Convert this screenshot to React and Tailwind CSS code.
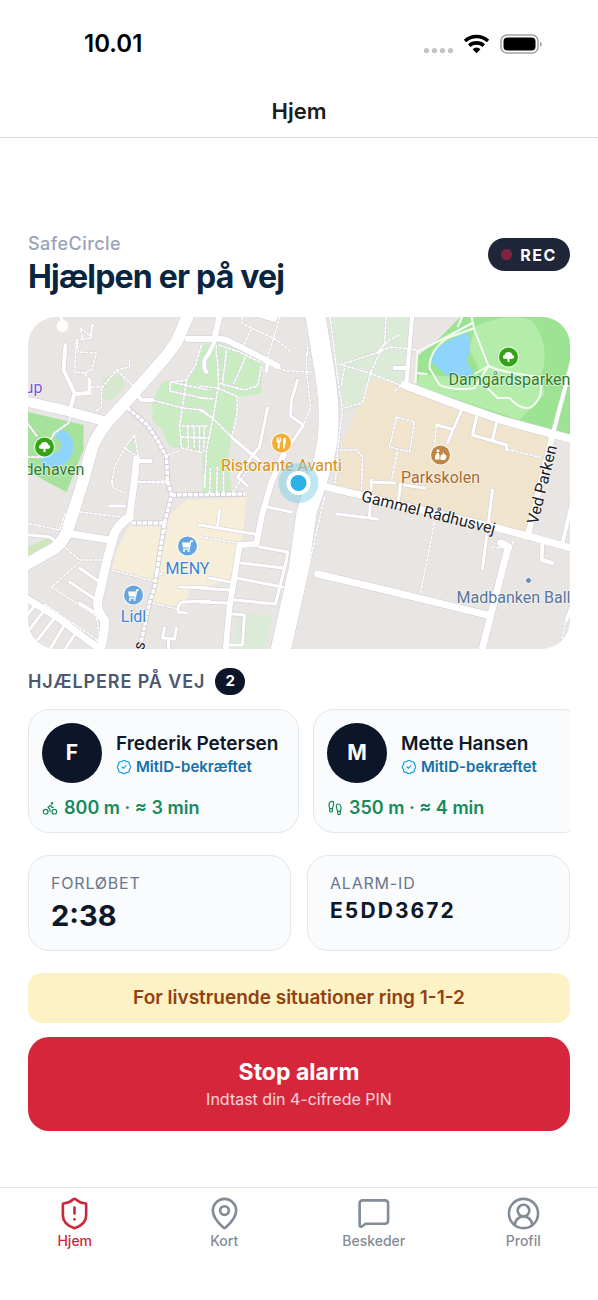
import React, { useState } from "react";
import { BadgeCheck, Bike, Footprints, MapPin, ShieldAlert, CircleUserRound } from "lucide-react";

const helpers = [
  { name: "Frederik Petersen", distance: "800 m", eta: "3 min", icon: Bike },
  { name: "Mette Hansen", distance: "350 m", eta: "4 min", icon: Footprints },
];

const MessageIcon = ({ size = 24, strokeWidth = 2 }) => (
  <svg
    width={size}
    height={size}
    viewBox="0 0 24 24"
    fill="none"
    stroke="currentColor"
    strokeWidth={strokeWidth}
    strokeLinecap="round"
    strokeLinejoin="round"
    aria-hidden="true"
  >
    <path d="M3.500 21a.9.9 0 0 1-1-1V5a2 2 0 0 1 2-2h15.500a2 2 0 0 1 2 2v12a2 2 0 0 1-2 2H6.500l-2.200 1.700a1 1 0 0 1-.8.3z" />
  </svg>
);

const tabs = [
  { label: "Hjem", icon: ShieldAlert },
  { label: "Kort", icon: MapPin },
  { label: "Beskeder", icon: MessageIcon },
  { label: "Profil", icon: CircleUserRound },
];

const StatusBar = () => (
  <div className="flex items-center justify-between h-[88px] pl-[84px] pr-[55px]">
    <span className="text-[24px] leading-7 font-semibold text-black">10.01</span>
    <svg width="120" height="24" viewBox="0 0 120 24" aria-hidden="true">
      <g fill="#c4c4c6">
        <circle cx="3.5" cy="18.5" r="2.6" />
        <circle cx="11.5" cy="18.5" r="2.6" />
        <circle cx="19.5" cy="18.5" r="2.6" />
        <circle cx="27.5" cy="18.5" r="2.6" />
      </g>
      <g fill="none" stroke="#000" strokeWidth="3.6">
        <path d="M42 9a17 17 0 0 1 23 0" />
        <path d="M46.2 13.6a11 11 0 0 1 14.6 0" />
      </g>
      <path d="M53.5 21.2l-3.9-4a5.6 5.6 0 0 1 7.8 0z" />
      <rect x="78" y="3" width="37" height="18" rx="6" fill="none" stroke="#a3a3a5" strokeWidth="1.5" />
      <rect x="80.5" y="5.5" width="32" height="13" rx="4" />
      <path d="M117 9.500c2.400 1 2.400 4.500 0 5.500z" fill="#a3a3a5" />
    </svg>
  </div>
);

const TreePin = ({ x, y }) => (
  <g transform={`translate(${x} ${y})`}>
    <circle r="10.500" fill="#fff" fillOpacity="0.8" />
    <circle r="9.500" fill="#35a316" />
    <path
      d="M-1 5V1.500c-1 .8-4.600.8-4.600-1.500 0-1.200.8-1.900 1.700-2C-3.700-4-2-5 0-5s3.700 1 3.900 3c.9.1 1.700.8 1.700 2 0 2.300-3.600 2.300-4.600 1.500V5z"
      fill="#fff"
    />
  </g>
);

const CartPin = ({ x, y }) => (
  <g transform={`translate(${x} ${y})`}>
    <circle r="10.500" fill="#fff" fillOpacity="0.8" />
    <circle r="9.500" fill="#64a5e0" />
    <path d="M-5.500-3.500h8l-1 5h-6z" fill="#fff" />
    <path d="M5.500-5H3.300L1.700 3.200h-6" fill="none" stroke="#fff" strokeWidth="1.300" />
    <circle cx="-3.500" cy="5" r="1.100" fill="#fff" />
    <circle cx="1" cy="5" r="1.100" fill="#fff" />
  </g>
);

// Every street is stroked twice: a wider grey casing below, white on top
const streets = [
  { w: 20, d: "M315 310L326 377Q330 405 329 427Q328 450 321 470L307 513L299 570L280 655" },
  { w: 12, d: "M191 310L177 342L166 357L137 390L108 422Q96 437 92 450L83 483L68 530Q64 542 54 549L22 567" },
  { w: 10, d: "M20 400L64 410L108 422" },
  { w: 7, d: "M22 595L60 619L104 652" },
  { w: 9, d: "M130 517Q115 527 113 540L107 562L98 603Q98 612 105 620Q106 632 100 652" },
  { w: 7, d: "M137 459L135 480L130 517M66 533L110 540" },
  { w: 6, d: "M188 339L210 339Q223 337 233 343L253 353L278 366M215 338L221 312" },
  { w: 4, d: "M215 341Q212 350 205 360Q204 370 207 372M268 362L267 371M255 314L275 320L278 314" },
  { w: 8, d: "M405 385L450 402L502 420L575 440" },
  { w: 4, d: "M413 312L407 382M395 368L408 368M573 360L553 435" },
  { w: 6, d: "M553 435L528 537" },
  { w: 7, d: "M327 487L360 495L498 528L532 537L575 549" },
  { w: 7, d: "M318 574L390 591L488 615M501 543L509 547L504 565L482 652" },
  { w: 4, d: "M66 345L64 370L75 393L71 408M75 394L90 393L90 380M135 392L142 400L153 400M138 461L151 461M60 312L63 322" },
  { w: 3, d: "M298 380L292 400L291 416L304 425L284 455" },
  { w: 6, d: "M284 455L272 482L262 517L257 544L240 545L235 577L230 607L226 652" },
  { w: 3, d: "M268 408L260 447L252 457L238 477L248 486M232 437L253 455L265 465" },
  { w: 3, d: "M268 507L292 512M260 547L288 552L287 560L276 604L235 600M242 563L284 568M237 578L283 587M210 578L230 582M200 588L230 590M200 602L228 603M233 614L245 615L243 645L230 645" },
  { w: 3, d: "M200 525L255 534M220 510L218 527M180 587L210 588M187 613L179 612Q177 607 182 602L210 601M165 628L163 638L175 639L177 628M169 639L169 652" },
  { w: 3, d: "M80 568L100 582M70 582L97 600M80 603L95 612M110 506L125 506M20 534L50 537L62 545" },
  { w: 3, d: "M45 610L28 632M55 618L38 640M65 625L50 650M76 633L62 655M36 605L22 622" },
  { w: 3, d: "M462 410L448 443M437 425L452 429M477 417L473 435L507 445L507 450M497 423L493 440M338 514L378 519M372 480L370 517M493 490L483 569M405 485L425 488M371 482L395 483M401 484L399 500" },
  { w: 4, d: "M543 542L542 560L553 563M572 505L563 543M572 607L567 620" },
];

const paths = [
  "M92 325L92 338L83 339L81 328L91 336L94 324M77 340L79 352L97 353L92 370L85 373L75 372L77 340L83 339M85 373L90 380",
  "M92 387L103 387L117 370L130 367L130 358M117 370L135 387M102 387L102 407L95 412",
  "M153 400L183 408L203 410L212 418M202 345L196 365L187 380L183 408L180 425L182 448L203 453",
  "M171 382L209 390M171 382L170 391L208 399M171 382L187 380",
  "M182 426L208 426M181 437L208 438M188 426L189 449M194 426L195 449M200 426L200 452M205 426L204 452",
  "M217 345Q216 355 218 360L219 385L215 410L207 450L205 488M200 386L218 388L237 396Q240 410 232 437M218 383L245 390L258 386L262 366M227 350L223 384M246 357L234 384M200 410L212 417L232 437M219 345L240 352L262 363M200 398L215 399",
  "M135 435L125 448L115 467L112 485M135 435L139 457M125 448L137 456M138 482L168 483M168 455L182 450",
  "M27 422L38 437M71 417L69 423L55 433L49 443M27 457L44 457",
  "M243 312L242 323L277 340L292 352M252 329L244 345M282 312L268 358",
  "M278 368L287 371L312 372M307 353L307 372L311 407L304 425M308 355L308 345",
  "M330 312L338 377L343 410L338 450L336 483M325 497L290 652",
  "M340 365L377 353L390 340L400 335M387 312L385 343L371 373L363 403L345 408M343 365L370 373L405 387M377 353L392 347L418 350M345 368L342 385M395 391L404 384",
  "M397 417L415 422L410 452L390 447Z M398 452L392 480M437 425L435 445M340 450L357 450L363 457L362 490M507 449L543 458",
  "M435 522L421 593M492 547L502 548M514 541L511 550M566 622L562 642",
  "M63 545L80 560L103 560M80 562L52 587L97 616L100 637L95 643M80 512L123 517M112 480L114 488L126 493M138 482L170 481M66 513L60 530L27 523M112 570L154 581M153 603L178 609M172 531L165 530M155 572L165 575",
  "M200 537L238 543M205 488L205 475M210 494L211 468M217 494L218 466M224 494L224 468M248 470L232 494",
  "M45 604L98 640M30 610L40 604",
];

const parkPaths = [
  "M418 352L445 338L473 323M465 312L458 327M418 350L416 383M415 373L428 374",
  "M475 328L448 338Q430 350 430 368L440 385Q455 391 475 388L489 366L475 374M471 312L475 330L489 366Q500 372 540 377Q546 396 532 407Q522 411 510 398L498 398L484 384",
];

const tracks = [
  "M128 408L148 425L158 440L167 457L168 480L172 495L165 523L155 587L150 603L140 650",
  "M172 495L246 494",
  "M132 523L167 523",
];

const StreetMap = () => (
  <svg
    viewBox="28 317 543 332"
    preserveAspectRatio="xMidYMid slice"
    className="block w-full h-full font-['Roboto',sans-serif]"
    role="img"
    aria-label="Kort"
  >
    <rect x="0" y="300" width="620" height="370" fill="#e8e5e3" />

    {/* Areas */}
    <path d="M153 403L157 392L163 382L187 380L196 362L203 345L220 342L240 351L263 363L262 393L238 397L238 410L232 437L228 460L232 492L203 494L203 455L182 448L170 447L163 430L153 420z" fill="#c9ecc2" />
    <path d="M20 410L84 425L84 450L67 492L46 481L20 466z" fill="#a6e29b" />
    <path d="M57 431C66 427 75 437 74 449C72 461 60 471 50 468C42 466 40 460 44 456L58 452C64 448 63 440 56 438z" fill="#8fd4fb" />
    <path d="M28 547L48 538L58 543L28 559z" fill="#cfe6bd" />
    <path d="M135 436L127 448L136 453z M103 378L120 374L126 386L112 400L103 400z" fill="#d6e8cd" />
    <path d="M327 310L414 310L405 385L375 378L363 407L345 410L338 370z" fill="#dbebd7" />
    <path d="M373 378L405 385L552 433L545 457L528 540L335 490L340 450L353 420z" fill="#f0e4cd" />
    <path d="M468 310H580V444L500 422L417 386V357L440 338z" fill="#9de394" />
    <path d="M475 327Q505 312 532 320Q552 345 542 375L545 395L520 420L417 386L420 374L485 380L470 350z" fill="#b4ecaa" />
    <path d="M468 332L471 347L467 363Q476 371 472 377L448 376L432 362L435 350L450 340z" fill="#8fd4fb" />
    <path d="M130 525L165 525L157 581L112 570L117 552z M187 500L247 497L243 537L233 580L190 590L185 607L153 603L170 515z" fill="#f6eed8" />
    <path d="M240 613L272 615L265 652L232 652z" fill="#dbebd7" />

    {/* Footpaths and streets */}
    <g fill="none" strokeLinejoin="round">
      {paths.map((d) => (
        <path key={d} d={d} stroke="#d3d0d8" strokeWidth="2.400" />
      ))}
      {tracks.map((d) => (
        <path key={d} d={d} stroke="#cdcad6" strokeWidth="5" />
      ))}
      {streets.map(({ w, d }) => (
        <path key={d} d={d} stroke="#cfccd9" strokeWidth={w + 1} strokeLinecap="round" />
      ))}
      {paths.map((d) => (
        <path key={d} d={d} stroke="#fff" strokeWidth="1.600" strokeDasharray="4 .6" />
      ))}
      {parkPaths.map((d) => (
        <path key={d} d={d} stroke="#f6fbf4" strokeWidth="2" />
      ))}
      {tracks.map((d) => (
        <path key={d} d={d} stroke="#fff" strokeWidth="3.500" strokeDasharray="4.500 1" />
      ))}
      {streets.map(({ w, d }) => (
        <path key={d} d={d} stroke="#fff" strokeWidth={w} strokeLinecap="round" />
      ))}
    </g>
    <circle cx="63" cy="326" r="6" fill="#fff" />

    {/* Places */}
    <TreePin x={45} y={447} />
    <TreePin x={509} y={357} />
    <CartPin x={188} y={546} />
    <CartPin x={134} y={595} />
    <g transform="translate(282 443)">
      <circle r="10.500" fill="#fff" fillOpacity="0.8" />
      <circle r="9.500" fill="#f5ac32" />
      <path
        d="M-5-5.500h1v3h.7v-3h1v3h.7v-3h1V-2q0 1.500-1.300 2v5.500h-1.800V0Q-5-.5-5-2zM1.500 5.500V-4Q2-5.500 4.300-5.500v6q0 1-1 1v4z"
        fill="#fff"
      />
    </g>
    <g transform="translate(441 455)">
      <circle r="10.500" fill="#fff" fillOpacity="0.8" />
      <circle r="9.500" fill="#bf8545" />
      <circle cx="-2.500" cy="-4.300" r="1.500" fill="#fff" />
      <path d="M-5.500 4.500V1L-3.700-2h2L-1 .5V4.500z" fill="#fff" />
      <path d="M0 5V1q.5-2 2.400-1.400L2-2l1.300-.6.2 1.800Q6-.8 6 1.800 5.500 5 3.500 5z" fill="#fff" />
    </g>
    <circle cx="529" cy="580.500" r="3" fill="#6f8cb3" stroke="#fff" strokeWidth="1" />

    <g
      fontSize="16"
      textAnchor="middle"
      stroke="#fff"
      strokeOpacity="0.7"
      strokeWidth="1.500"
      strokeLinejoin="round"
      paintOrder="stroke"
    >
      <text x="510" y="385" fill="#2c7a28">Damgårdsparken</text>
      <text x="55" y="475" fill="#2c7a28">dehaven</text>
      <text x="34" y="393" fill="#7d4fe0">up</text>
      <text x="282" y="471" fill="#d8900f">Ristorante Avanti</text>
      <text x="441" y="483" fill="#a9682c">Parkskolen</text>
      <text x="188" y="574" fill="#3a82d6">MENY</text>
      <text x="134" y="622" fill="#3a82d6">Lidl</text>
      <text x="457" y="603" fill="#58749a" textAnchor="start">Madbanken Ballerup</text>
      <text transform="translate(361 501) rotate(14)" fill="#1d1d1f" textAnchor="start">Gammel Rådhusvej</text>
      <text transform="translate(538 525) rotate(-76)" fill="#1d1d1f" textAnchor="start">Ved Parken</text>
      <text transform="translate(144 651) rotate(-76)" fill="#1d1d1f" textAnchor="start">s</text>
    </g>

    {/* Own position */}
    <circle cx="299" cy="483" r="20" fill="#7fcfea" fillOpacity="0.5" />
    <circle cx="299" cy="483" r="12" fill="#fff" />
    <circle cx="299" cy="483" r="8" fill="#2bb1e6" />
  </svg>
);

const HelperCard = ({ helper }) => {
  const Icon = helper.icon;
  return (
    <li className="shrink-0 w-[271px] rounded-[21px] border border-[#e2e8ee] bg-[#f9fbfd] px-[13px] pt-[13px] pb-3">
      <div className="flex items-center gap-[14px]">
        <div className="flex items-center justify-center shrink-0 w-[60px] h-[60px] rounded-full bg-[#0d1529] text-white text-[21px] font-bold">
          {helper.name[0]}
        </div>
        <div className="pt-[3px] whitespace-nowrap">
          <p className="text-[19px] leading-6 font-semibold text-[#0f172a]">{helper.name}</p>
          <p className="flex items-center gap-1 text-[15px] leading-[22px] font-semibold text-[#1270a8]">
            <BadgeCheck size={16} strokeWidth={1.8} className="text-[#1ea0dd]" />
            MitID-bekræftet
          </p>
        </div>
      </div>
      <p className="flex items-center gap-[6px] mt-3 text-[18px] leading-[25px] font-semibold text-[#168a5b]">
        <Icon size={16} strokeWidth={1.8} />
        {helper.distance} · ≈ {helper.eta}
      </p>
    </li>
  );
};

const App = () => {
  const [activeTab, setActiveTab] = useState("Hjem");

  return (
    <div className="min-h-screen flex flex-col bg-white font-['Inter',sans-serif]">
      <header className="border-b border-[#d8d8d8]">
        <StatusBar />
        <h1 className="h-[49px] pt-2 text-center text-[22px] leading-[30px] font-semibold text-[#1c1c1e]">Hjem</h1>
      </header>

      <main className="flex-1 px-7 pt-[94px]">
        <div className="flex items-start justify-between">
          <div>
            <p className="text-[18px] leading-6 font-medium tracking-wide text-[#98a3b8]">SafeCircle</p>
            <h2 className="text-[32px] leading-[42px] font-bold tracking-tight text-[#0a2540]">Hjælpen er på vej</h2>
          </div>
          <div className="flex items-center gap-2 h-[33px] mt-[6px] px-[13px] rounded-full bg-[#1f263a] text-white">
            <span className="w-[11px] h-[11px] rounded-full bg-[#7f2340]" />
            <span className="text-[16px] font-bold tracking-widest">REC</span>
          </div>
        </div>

        <div className="h-[332px] mt-[19px] rounded-[28px] overflow-hidden">
          <StreetMap />
        </div>

        <div className="flex items-center gap-[10px] mt-[19px]">
          <h3 className="text-[18px] leading-6 font-semibold tracking-wider text-[#4b5870]">HJÆLPERE PÅ VEJ</h3>
          <span className="flex items-center justify-center w-[30px] h-[27px] rounded-full bg-[#0d1529] text-white text-[15px] font-bold">
            {helpers.length}
          </span>
        </div>

        <ul className="flex gap-[14px] mt-[14px] overflow-hidden">
          {helpers.map((helper) => (
            <HelperCard key={helper.name} helper={helper} />
          ))}
        </ul>

        <div className="grid grid-cols-2 gap-4 mt-[22px]">
          <div className="h-24 rounded-[21px] border border-[#e2e8ee] bg-[#f9fbfd] px-[22px] pt-4">
            <p className="text-[16px] leading-[22px] tracking-wider text-[#6b768c]">FORLØBET</p>
            <p className="mt-1 text-[29px] leading-9 font-bold text-[#0f172a]">2:38</p>
          </div>
          <div className="h-24 rounded-[21px] border border-[#e2e8ee] bg-[#f9fbfd] px-[22px] pt-4">
            <p className="text-[16px] leading-[22px] tracking-wider text-[#6b768c]">ALARM-ID</p>
            <p className="mt-1 text-[21px] leading-[26px] font-bold tracking-widest text-[#0f172a]">E5DD3672</p>
          </div>
        </div>

        <p className="mt-[22px] py-3 rounded-[14px] bg-[#fdf1c6] text-center text-[19px] leading-[26px] font-semibold text-[#92400e]">
          For livstruende situationer ring 1-1-2
        </p>

        <button
          type="button"
          className="flex flex-col items-center justify-center w-full h-[94px] mt-[14px] rounded-[21px] bg-[#d6263c] text-white"
        >
          <span className="text-[23px] leading-[30px] font-bold">Stop alarm</span>
          <span className="text-[16px] leading-6 text-white/80">Indtast din 4-cifrede PIN</span>
        </button>
      </main>

      <nav className="grid grid-cols-4 h-[113px] pt-2 border-t border-[#e6e6e8]">
        {tabs.map(({ label, icon: Icon }) => (
          <button
            key={label}
            type="button"
            onClick={() => setActiveTab(label)}
            className={`flex flex-col items-center h-fit text-[14px] leading-5 font-medium ${
              activeTab === label ? "text-[#d0263c]" : "text-[#838b96]"
            }`}
          >
            <Icon size={35} strokeWidth={1.8} />
            {label}
          </button>
        ))}
      </nav>
    </div>
  );
};

export default App;
